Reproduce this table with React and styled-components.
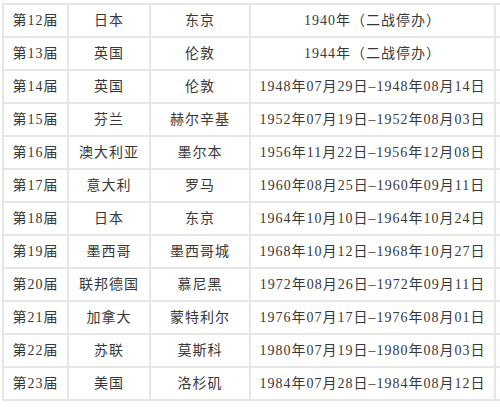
import React from "react";
import styled, { createGlobalStyle } from "styled-components";

const rows = [
  ["第12届", "日本", "东京", "1940年（二战停办）"],
  ["第13届", "英国", "伦敦", "1944年（二战停办）"],
  ["第14届", "英国", "伦敦", "1948年07月29日–1948年08月14日"],
  ["第15届", "芬兰", "赫尔辛基", "1952年07月19日–1952年08月03日"],
  ["第16届", "澳大利亚", "墨尔本", "1956年11月22日–1956年12月08日"],
  ["第17届", "意大利", "罗马", "1960年08月25日–1960年09月11日"],
  ["第18届", "日本", "东京", "1964年10月10日–1964年10月24日"],
  ["第19届", "墨西哥", "墨西哥城", "1968年10月12日–1968年10月27日"],
  ["第20届", "联邦德国", "慕尼黑", "1972年08月26日–1972年09月11日"],
  ["第21届", "加拿大", "蒙特利尔", "1976年07月17日–1976年08月01日"],
  ["第22届", "苏联", "莫斯科", "1980年07月19日–1980年08月03日"],
  ["第23届", "美国", "洛杉矶", "1984年07月28日–1984年08月12日"],
];

const widths = [65, 82, 100, 245, 80];

const GlobalStyle = createGlobalStyle`
  body {
    margin: 0;
    background: #ffffff;
  }
`;

const Frame = styled.div`
  width: 500px;
  height: 407px;
  overflow: hidden;
  background: #ffffff;
`;

const Table = styled.table`
  margin: 3px 0 0 2px;
  width: 574px;
  table-layout: fixed;
  border-collapse: collapse;
  font-family: "Liberation Serif", "Noto Sans CJK SC", serif;
  font-size: 14px;
  letter-spacing: 1px;
  color: #383838;
`;

const Col = styled.col`
  width: ${(p) => p.$w}px;
`;

const Row = styled.tr`
  height: 33px;
`;

const Cell = styled.td`
  border: 2px solid #e6e6e6;
  padding: 0;
  text-align: center;
  vertical-align: middle;
  white-space: nowrap;
  overflow: hidden;
  line-height: 29px;
`;

export default function App() {
  return (
    <Frame>
      <GlobalStyle />
      <Table>
        <colgroup>
          {widths.map((w, i) => (
            <Col key={i} $w={w} />
          ))}
        </colgroup>
        <tbody>
          {rows.map((r) => (
            <Row key={r[0]}>
              {r.map((c, i) => (
                <Cell key={i}>{c}</Cell>
              ))}
              <Cell />
            </Row>
          ))}
        </tbody>
      </Table>
    </Frame>
  );
}
